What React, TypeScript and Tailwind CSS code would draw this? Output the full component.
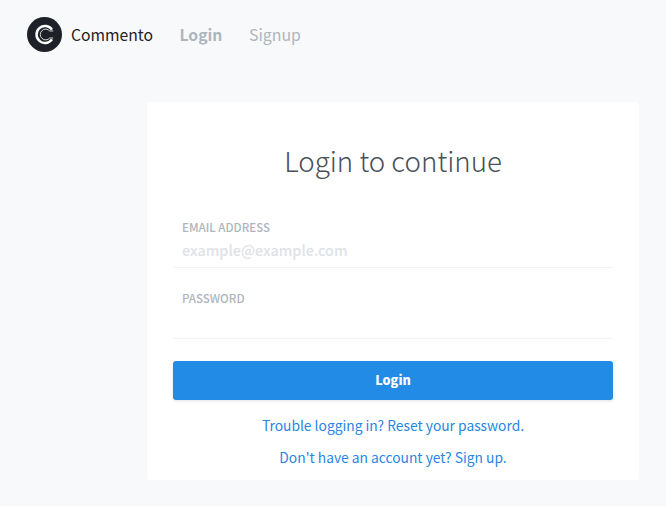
import React from "react";

function Logo() {
  return (
    <svg className="size-[35px] shrink-0" viewBox="0 0 35 35" fill="none" aria-hidden="true">
      <circle cx="17.5" cy="17.5" r="17.5" fill="#1e2127" />
      <path d="M25 12.6A8.5 8.5 0 1 0 25 22.4" stroke="#fff" strokeWidth="2.5" />
      <path d="M26.2 14H22.8A5.4 5.4 0 1 0 22.8 21H26.2" stroke="#fff" strokeWidth="0.8" />
    </svg>
  );
}

function Field({ label, type, placeholder }: { label: string; type: string; placeholder?: string }) {
  return (
    <label className="flex h-[55px] flex-col border-b border-[#f1f3f5] px-[9px]">
      <span className="h-5 text-[11.55px] leading-[28px] font-medium whitespace-nowrap text-[#adb5bd] uppercase">{label}</span>
      <input
        type={type}
        placeholder={placeholder}
        className="mt-[5px] h-6 w-full bg-transparent text-[14.45px] leading-6 font-medium text-[#495057] outline-none placeholder:text-[#dee2e6]"
      />
    </label>
  );
}

export default function App() {
  return (
    <div className="min-h-[506px] bg-[#f8f9fb] font-['Noto_Sans_CJK_SC',sans-serif]">
      <nav className="flex h-[102px] items-start pt-[17px] pl-[27px] text-[15.7px] leading-[35px]">
        <a href="#" className="flex w-[152.5px] gap-[9px] text-[#1e2127]">
          <Logo />
          <span>Commento</span>
        </a>
        <a href="#" className="w-[69.5px] font-bold text-[#adb5bd]">Login</a>
        <a href="#" className="text-[15.85px] text-[#adb5bd]">Signup</a>
      </nav>
      <main className="ml-[147px] flex h-[378px] w-[492px] flex-col rounded-[3px] bg-white px-[26px]">
        <h1 className="mt-[34px] h-12 text-center text-[27.7px] leading-[48px] font-light text-[#495057]">Login to continue</h1>
        <form className="mt-[29px] flex flex-col" onSubmit={(e) => e.preventDefault()}>
          <Field label="Email Address" type="email" placeholder="example@example.com" />
          <div className="mt-4">
            <Field label="Password" type="password" />
          </div>
          <button className="mt-[22px] h-[39px] rounded-[3px] bg-[#228be6] pb-[2px] text-[12.6px] leading-[37px] font-black text-white shadow-[0_1px_3px_rgba(50,50,93,0.15)]">
            Login
          </button>
        </form>
        <a href="#" className="mt-[9px] h-8 text-center text-[13.8px] leading-8 text-[#2686e4]">Trouble logging in? Reset your password.</a>
        <a href="#" className="h-8 text-center text-[13.8px] leading-8 text-[#2686e4]">Don't have an account yet? Sign up.</a>
      </main>
    </div>
  );
}
